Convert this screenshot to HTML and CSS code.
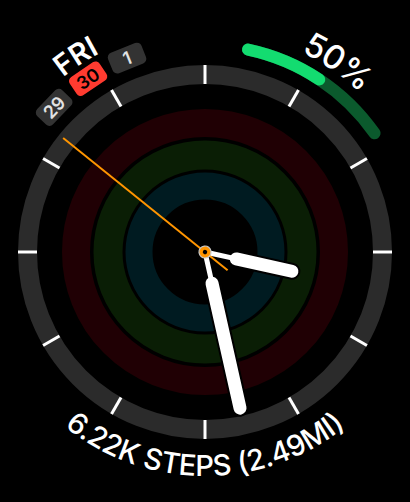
FILE: index.html
```html
<!DOCTYPE html>
<html lang="en">
<head>
    <meta charset="UTF-8">
    <title>Activity Face</title>
    <link rel="stylesheet" href="styles.css">
</head>
<body>
    <div class="watch">
        <svg class="dial" width="410" height="502" viewBox="0 0 410 502">
            <defs>
                <!-- arcs used to bend the labels round the dial -->
                <path id="arcFri" d="M -20 252 A 225 225 0 0 1 430 252"/>
                <path id="arcBatt" d="M -17 252 A 222 222 0 0 1 427 252"/>
                <path id="arcSteps" d="M -19 252 A 224 224 0 0 0 429 252"/>
            </defs>

            <!-- activity rings (empty) -->
            <circle class="ring ring-move" cx="205" cy="252" r="129"/>
            <circle class="ring ring-exercise" cx="205" cy="252" r="97"/>
            <circle class="ring ring-stand" cx="205" cy="252" r="66"/>

            <!-- bezel + hour ticks -->
            <circle class="bezel" cx="205" cy="252" r="177.5"/>
            <g class="ticks">
                <line x1="205" y1="65" x2="205" y2="84"/>
                <line x1="205" y1="65" x2="205" y2="84" transform="rotate(30 205 252)"/>
                <line x1="205" y1="65" x2="205" y2="84" transform="rotate(60 205 252)"/>
                <line x1="205" y1="65" x2="205" y2="84" transform="rotate(90 205 252)"/>
                <line x1="205" y1="65" x2="205" y2="84" transform="rotate(120 205 252)"/>
                <line x1="205" y1="65" x2="205" y2="84" transform="rotate(150 205 252)"/>
                <line x1="205" y1="65" x2="205" y2="84" transform="rotate(180 205 252)"/>
                <line x1="205" y1="65" x2="205" y2="84" transform="rotate(210 205 252)"/>
                <line x1="205" y1="65" x2="205" y2="84" transform="rotate(240 205 252)"/>
                <line x1="205" y1="65" x2="205" y2="84" transform="rotate(270 205 252)"/>
                <line x1="205" y1="65" x2="205" y2="84" transform="rotate(300 205 252)"/>
                <line x1="205" y1="65" x2="205" y2="84" transform="rotate(330 205 252)"/>
            </g>

            <!-- date complication -->
            <text class="label label-day"><textPath href="#arcFri" startOffset="31.4%">FRI</textPath></text>
            <g transform="translate(205 252) rotate(-46.2) translate(0 -209)">
                <rect class="date" x="-18" y="-11" width="36" height="22" rx="5"/>
                <text class="date-num" y="6.5">29</text>
            </g>
            <g transform="translate(205 252) rotate(-34) translate(0 -209)">
                <rect class="date date-today" x="-18" y="-11" width="36" height="22" rx="5"/>
                <text class="date-num date-num-today" y="6.5">30</text>
            </g>
            <g transform="translate(205 252) rotate(-21.9) translate(0 -209)">
                <rect class="date" x="-18" y="-11" width="36" height="22" rx="5"/>
                <text class="date-num" y="6.5">1</text>
            </g>

            <!-- battery complication -->
            <path class="batt-track" d="M 248.04 49.53 A 207 207 0 0 1 374.57 133.27"/>
            <path class="batt-fill" d="M 248.04 49.53 A 207 207 0 0 1 319.25 79.38"/>
            <text class="label label-batt"><textPath href="#arcBatt" startOffset="69.4%">50%</textPath></text>

            <!-- steps -->
            <text class="label label-steps"><textPath href="#arcSteps" startOffset="50%">6.22K STEPS (2.49MI)</textPath></text>

            <!-- minute hand -->
            <g transform="translate(205 252) rotate(167.35)">
                <line class="hand-edge neck-edge" x1="0" y1="0" x2="0" y2="-32"/>
                <line class="hand-edge body-edge" x1="0" y1="-32" x2="0" y2="-160"/>
                <line class="hand neck" x1="0" y1="0" x2="0" y2="-32"/>
                <line class="hand body" x1="0" y1="-32" x2="0" y2="-160"/>
            </g>

            <!-- hour hand -->
            <g transform="translate(205 252) rotate(102.5)">
                <line class="hand-edge neck-edge" x1="0" y1="0" x2="0" y2="-32"/>
                <line class="hand-edge body-edge" x1="0" y1="-32" x2="0" y2="-89"/>
                <line class="hand neck" x1="0" y1="0" x2="0" y2="-32"/>
                <line class="hand body" x1="0" y1="-32" x2="0" y2="-89"/>
            </g>

            <!-- seconds -->
            <g transform="translate(205 252) rotate(308.8)">
                <line class="seconds" x1="0" y1="29" x2="0" y2="-182"/>
                <circle class="hub" r="6"/>
                <circle class="hub-dot" r="2.2"/>
            </g>
        </svg>
    </div>
</body>
</html>
```

FILE: styles.css
```css
* {
    margin: 0;
    padding: 0;
    box-sizing: border-box;
}

body {
    background-color: #000;
    font-family: 'Inter', 'Roboto', sans-serif;
}

.watch {
    width: 410px;
    height: 502px;
    overflow: hidden;
}

.dial {
    display: block;
}

/* activity rings */
.ring {
    fill: none;
}

.ring-move {
    stroke: #200004;
    stroke-width: 28;
}

.ring-exercise {
    stroke: #0a1e05;
    stroke-width: 29;
}

.ring-stand {
    stroke: #001b21;
    stroke-width: 27;
}

/* bezel */
.bezel {
    fill: none;
    stroke: #2b2b2b;
    stroke-width: 19;
}

.ticks line {
    stroke: #fff;
    stroke-width: 3;
}

/* labels on arcs */
.label {
    fill: #fff;
    text-anchor: middle;
}

.label-day {
    font-size: 29px;
    font-weight: 600;
}

.label-batt {
    font-size: 33px;
    font-weight: 500;
    letter-spacing: -1px;
}

.label-steps {
    font-size: 29px;
    font-weight: 500;
    letter-spacing: -0.3px;
}

/* date chips */
.date {
    fill: #333;
}

.date-today {
    fill: #ff3b30;
}

.date-num {
    fill: #e2e2e2;
    font-size: 18px;
    font-weight: 600;
    text-anchor: middle;
}

.date-num-today {
    fill: #000;
}

/* battery arc */
.batt-track,
.batt-fill {
    fill: none;
    stroke-width: 12;
    stroke-linecap: round;
}

.batt-track {
    stroke: #0b5a2d;
}

.batt-fill {
    stroke: #13dc70;
}

/* hands */
.hand,
.hand-edge {
    stroke-linecap: round;
}

.hand {
    stroke: #fff;
}

.hand-edge {
    stroke: #000;
}

.neck {
    stroke-width: 5;
}

.neck-edge {
    stroke-width: 8;
}

.body {
    stroke-width: 13;
}

.body-edge {
    stroke-width: 17;
}

.seconds {
    stroke: #ff9500;
    stroke-width: 2;
}

.hub {
    fill: #ff9500;
    stroke: #c8c8c8;
    stroke-width: 1.2;
}

.hub-dot {
    fill: #000;
}
```
